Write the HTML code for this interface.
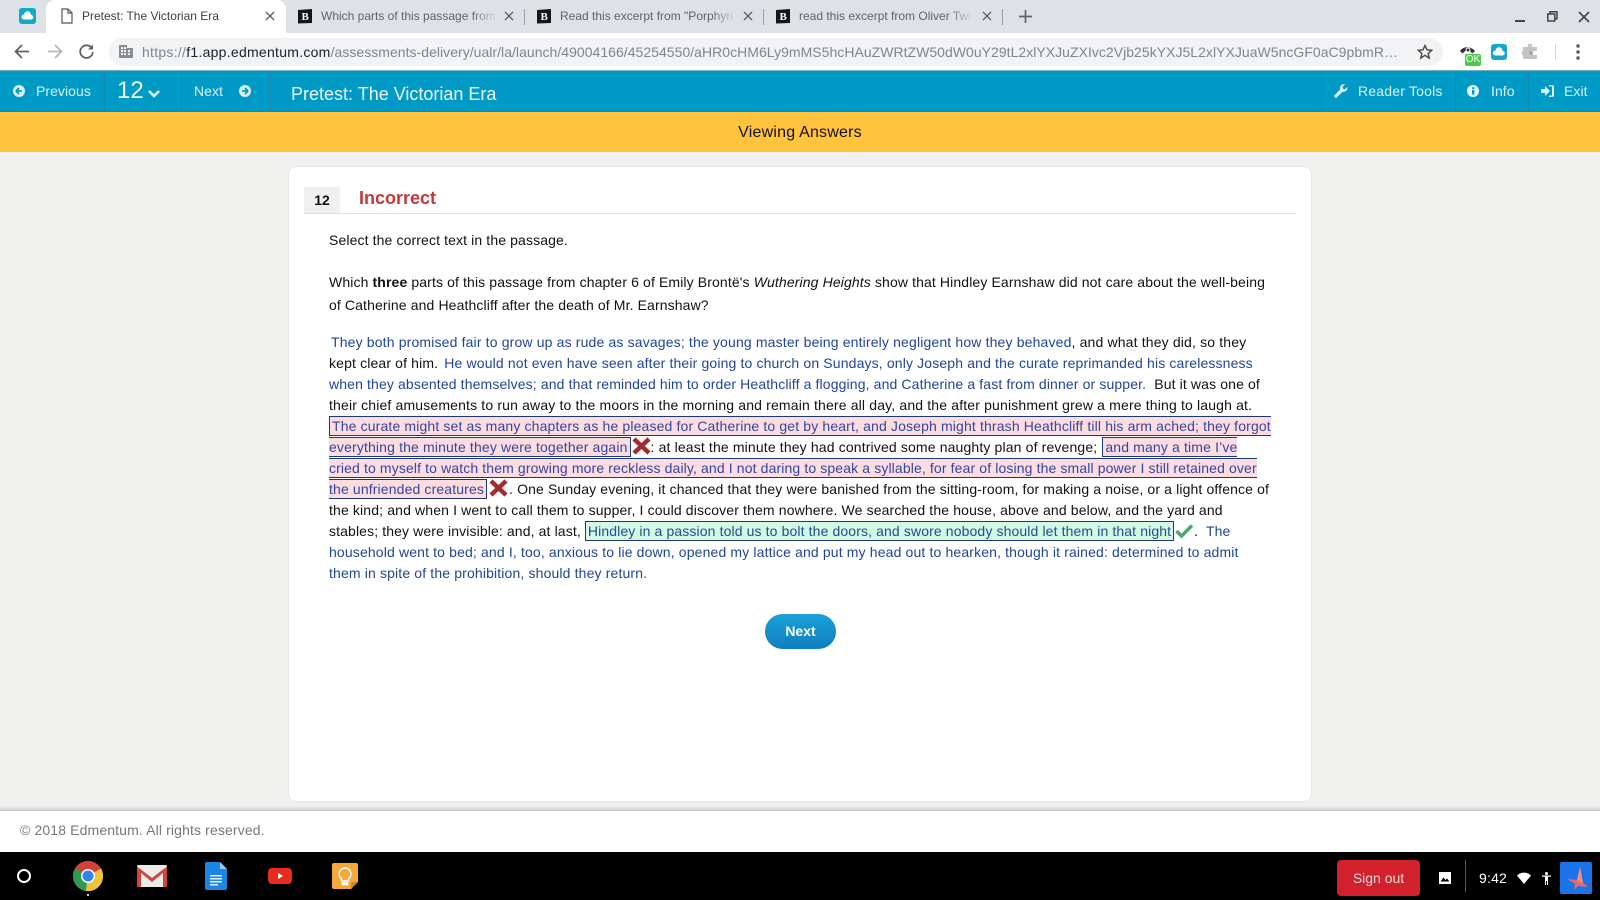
<!DOCTYPE html>
<html><head><meta charset="utf-8"><title>Pretest: The Victorian Era</title>
<style>
html,body{margin:0;padding:0;width:1600px;height:900px;overflow:hidden;background:#f0f0ee;font-family:"Liberation Sans",sans-serif;color:#111}
.a{position:absolute;white-space:pre}
svg{position:absolute;overflow:visible}
.t{font-size:12px;color:#5f6368;line-height:16px;top:8px;overflow:hidden}
.f{-webkit-mask-image:linear-gradient(90deg,#000 86%,transparent 100%);mask-image:linear-gradient(90deg,#000 86%,transparent 100%)}
.nav{font-size:14px;color:#d9f0f7;line-height:20px;top:81px;letter-spacing:.05px}
.sep{position:absolute;top:71px;height:40px;width:1px;background:#1b86ab}
.l{position:absolute;left:329px;white-space:pre;font-size:14px;line-height:21px;height:21px;letter-spacing:.145px}
.q{letter-spacing:.12px}
.b{color:#1f4597}
.p{background:#fbdde1;color:#36459f;border-top:1px solid #1c3878;border-bottom:1px solid #1c3878;padding:1px 0}
.g{background:#d3f8e4;color:#1b4f96;border:1px solid #1c3878;padding:1px 2px}
</style></head><body>
<!-- tab strip -->
<div class="a" style="left:0;top:0;width:1600px;height:33px;background:#dee1e6"></div>
<div class="a" style="left:46px;top:0;width:240px;height:33px;background:#fff;border-radius:9px 9px 0 0"></div>
<div class="a" style="left:19px;top:8px;width:17px;height:16px;background:#13a9c9;border-radius:3px"></div>
<svg style="left:19px;top:8px" width="17" height="16"><path d="M5 11.500a2.500 2.500 0 0 1 0-5 3.500 3.500 0 0 1 7 .5 2.200 2.200 0 0 1 0 4.500z" fill="#fff"/></svg>
<svg style="left:61px;top:8px" width="12" height="16" fill="none" stroke="#555" stroke-width="1.200"><path d="M1 1h6l4 4v10H1zM7 1v4h4"/></svg>
<div class="a t" style="left:82px;color:#3c4043;width:140px">Pretest: The Victorian Era</div>
<svg style="left:266px;top:12px" width="8" height="8" stroke="#5f6368" stroke-width="1.400"><path d="M0 0l8 8M8 0L0 8"/></svg>

<svg style="left:297px;top:8px" width="16" height="16"><path d="M1 2l14-1v14l-14 .5z" fill="#161616"/><text x="4.500" y="12" font-size="11" font-weight="bold" font-family="Liberation Serif" fill="#fff">B</text></svg>
<div class="a t f" style="left:321px;width:176px">Which parts of this passage from</div>
<svg style="left:505px;top:12px" width="8" height="8" stroke="#5f6368" stroke-width="1.400"><path d="M0 0l8 8M8 0L0 8"/></svg>
<div class="a" style="left:524px;top:9px;width:1px;height:16px;background:#9aa0a6"></div>
<svg style="left:536px;top:8px" width="16" height="16"><path d="M1 2l14-1v14l-14 .5z" fill="#161616"/><text x="4.500" y="12" font-size="11" font-weight="bold" font-family="Liberation Serif" fill="#fff">B</text></svg>
<div class="a t f" style="left:560px;width:176px">Read this excerpt from "Porphyri</div>
<svg style="left:744px;top:12px" width="8" height="8" stroke="#5f6368" stroke-width="1.400"><path d="M0 0l8 8M8 0L0 8"/></svg>
<div class="a" style="left:763px;top:9px;width:1px;height:16px;background:#9aa0a6"></div>
<svg style="left:775px;top:8px" width="16" height="16"><path d="M1 2l14-1v14l-14 .5z" fill="#161616"/><text x="4.500" y="12" font-size="11" font-weight="bold" font-family="Liberation Serif" fill="#fff">B</text></svg>
<div class="a t f" style="left:799px;width:174px">read this excerpt from Oliver Twi</div>
<svg style="left:983px;top:12px" width="8" height="8" stroke="#5f6368" stroke-width="1.400"><path d="M0 0l8 8M8 0L0 8"/></svg>
<div class="a" style="left:1002px;top:9px;width:1px;height:16px;background:#9aa0a6"></div>
<svg style="left:1019px;top:10px" width="13" height="13" stroke="#5f6368" stroke-width="1.700"><path d="M6.500 0v13M0 6.500h13"/></svg>
<!-- window controls -->
<div class="a" style="left:1515px;top:20px;width:10px;height:2px;background:#444"></div>
<svg style="left:1547px;top:11px" width="11" height="11" fill="none" stroke="#444" stroke-width="1.500"><path d="M3 3V.8h7v7H8M.8 3h7v7h-7z"/></svg>
<svg style="left:1579px;top:12px" width="10" height="10" stroke="#444" stroke-width="1.700"><path d="M0 0l10 10M10 0L0 10"/></svg>
<!-- toolbar -->
<div class="a" style="left:0;top:33px;width:1600px;height:38px;background:#fff"></div>
<svg style="left:14px;top:44px" width="16" height="15" fill="none" stroke="#5f6368" stroke-width="1.800"><path d="M15 7.500H2M8 1L1.500 7.500 8 14"/></svg>
<svg style="left:47px;top:44px" width="16" height="15" fill="none" stroke="#b4b7bb" stroke-width="1.800"><path d="M1 7.500h13M8 1l6.500 6.500L8 14"/></svg>
<svg style="left:79px;top:44px" width="15" height="15" fill="none" stroke="#5f6368" stroke-width="1.800"><path d="M13 4.500A6.300 6.300 0 1 0 13.800 8"/><path d="M14 .5v5H9z" fill="#5f6368" stroke="none"/></svg>
<div class="a" style="left:109px;top:38px;width:1334px;height:28px;background:#f1f3f4;border-radius:14px"></div>
<svg style="left:119px;top:45px" width="14" height="13" fill="#8a8d91"><path d="M0 0h8v3h6v10H0zM2 2v2h2V2zm3 0v2h2V2zM2 5v2h2V5zm3 0v2h2V5zM2 8v2h2V8zm3 0v2h2V8zm4-3v2h2V5zm0 3v2h2V8z" fill-rule="evenodd"/></svg>
<div class="a" style="left:142px;top:43px;font-size:14px;line-height:18px;color:#80868b;letter-spacing:.03px"><span style="letter-spacing:.27px">https://<span style="color:#202124">f1.app.edmentum.com</span></span>/assessments-delivery/ualr/la/launch/49004166/45254550/aHR0cHM6Ly9mMS5hcHAuZWRtZW50dW0uY29tL2xlYXJuZXIvc2Vjb25kYXJ5L2xlYXJuaW5ncGF0aC9pbmR…</div>
<svg style="left:1417px;top:44px" width="16" height="15" fill="none" stroke="#444" stroke-width="1.400"><path d="M8 1.500l2 4.300 4.700.5-3.500 3.200 1 4.600L8 11.300l-4.200 2.800 1-4.600L1.300 6.300 6 5.800z"/></svg>
<svg style="left:1459px;top:45px" width="18" height="11"><path d="M1 6c3-5 11-5 15 0-1 1-2 2-3 2.500a5 5 0 0 0-9 0C3 8 2 7 1 6z" fill="#333"/><circle cx="9" cy="5" r="2.500" fill="#fff"/><circle cx="9" cy="5" r="1.500" fill="#333"/></svg>
<div class="a" style="left:1465px;top:54px;width:16px;height:12px;background:#4cc94a;border-radius:2px;color:#fff;font-size:10px;line-height:12px;text-align:center">OK</div>
<div class="a" style="left:1491px;top:44px;width:16px;height:16px;background:#13a9c9;border-radius:3px"></div>
<svg style="left:1491px;top:44px" width="16" height="16"><path d="M4.500 11.500a2.500 2.500 0 0 1 0-5 3.500 3.500 0 0 1 7 .5 2.200 2.200 0 0 1 0 4.500z" fill="#fff"/></svg>
<svg style="left:1522px;top:44px" width="16" height="16" fill="#c2c4c6"><path d="M6 0h4v3h5v4h-2.500a2 2 0 0 0 0 4H15v4H1v-4H0V7h1V3h5z"/><circle cx="9" cy="9" r="2" fill="#a5a7a9"/></svg>
<div class="a" style="left:1555px;top:44px;width:1px;height:16px;background:#d4d6d8"></div>
<svg style="left:1576px;top:44px" width="4" height="16" fill="#555"><circle cx="2" cy="2" r="1.700"/><circle cx="2" cy="8" r="1.700"/><circle cx="2" cy="14" r="1.700"/></svg>
<!-- blue nav -->
<div class="a" style="left:0;top:70px;width:1600px;height:42px;background:#009ac7"></div>
<div class="a" style="left:0;top:70px;width:1600px;height:1px;background:#6fb4cb"></div>
<div class="a" style="left:0;top:111px;width:1600px;height:1px;background:#1b8aa0"></div>
<div class="sep" style="left:104px"></div><div class="sep" style="left:181px"></div><div class="sep" style="left:270px"></div>
<div class="sep" style="left:1321px"></div><div class="sep" style="left:1455px"></div><div class="sep" style="left:1528px"></div>
<svg style="left:13px;top:85px" width="12" height="12"><circle cx="6" cy="6" r="6" fill="#d9f0f7"/><path d="M3 6l3-3M3 6l3 3M3 6h6" stroke="#009ac7" stroke-width="1.800" fill="none"/></svg>
<div class="a nav" style="left:36px">Previous</div>
<div class="a" style="left:117px;top:76px;font-size:24px;line-height:30px;color:#eaf7fb">12</div>
<svg style="left:148px;top:90px" width="12" height="8" fill="none" stroke="#eaf7fb" stroke-width="2.500"><path d="M1 1l5 5 5-5"/></svg>
<div class="a nav" style="left:194px">Next</div>
<svg style="left:239px;top:85px" width="12" height="12"><circle cx="6" cy="6" r="6" fill="#d9f0f7"/><path d="M9 6L6 3M9 6L6 9M9 6H3" stroke="#009ac7" stroke-width="1.800" fill="none"/></svg>
<div class="a" style="left:291px;top:83px;font-size:18px;line-height:22px;color:#eaf7fb">Pretest: The Victorian Era</div>
<svg style="left:1334px;top:84px" width="14" height="14" fill="#d9f0f7"><path d="M13.500 3l-2.500 2.200L9 4.700 8.500 2.800 11 .5C8.500-.3 6 1.500 6 4c0 .5 0 1 .2 1.300L.8 11a1.500 1.500 0 0 0 2.200 2.200l5.700-5.500C11.500 8.500 14 6 13.500 3z"/></svg>
<div class="a nav" style="left:1358px;letter-spacing:.2px">Reader Tools</div>
<svg style="left:1467px;top:85px" width="12" height="12"><circle cx="6" cy="6" r="6" fill="#eaf7fb"/><rect x="5" y="5" width="2.400" height="4.500" fill="#009ac7"/><rect x="5" y="2.300" width="2.400" height="1.800" fill="#009ac7"/></svg>
<div class="a nav" style="left:1491px">Info</div>
<svg style="left:1541px;top:85px" width="13" height="12" fill="#d9f0f7"><path d="M0 4h4V1l5 5-5 5V8H0z"/><path d="M8 0h3a2 2 0 0 1 2 2v8a2 2 0 0 1-2 2H8v-1.500h3V1.500H8z"/></svg>
<div class="a nav" style="left:1564px">Exit</div>
<!-- yellow -->
<div class="a" style="left:0;top:112px;width:1600px;height:40px;background:#ffc33d"></div>
<div class="a" style="left:0;top:123px;width:1600px;text-align:center;font-size:16px;line-height:20px;color:#111;letter-spacing:.2px">Viewing Answers</div>
<!-- card -->
<div class="a" style="left:288px;top:166px;width:1022px;height:634px;background:#fff;border:1px solid #e6e6e6;border-radius:8px"></div>
<div class="a" style="left:304px;top:187px;width:36px;height:26px;background:#f0f0f0;font-weight:bold;font-size:14px;line-height:26px;text-align:center">12</div>
<div class="a" style="left:304px;top:213px;width:992px;height:1px;background:#e2e2e2"></div>
<div class="a" style="left:359px;top:187px;font-weight:bold;font-size:18px;line-height:22px;color:#c0393b">Incorrect</div>
<div class="l q" style="top:230px">Select the correct text in the passage.</div>
<div class="l q" style="top:272px">Which <b>three</b> parts of this passage from chapter 6 of Emily Brontë's <i>Wuthering Heights</i> show that Hindley Earnshaw did not care about the well-being</div>
<div class="l q" style="top:295px">of Catherine and Heathcliff after the death of Mr. Earnshaw?</div>

<div class="l" style="top:332px;left:331px;letter-spacing:.155px"><span class="b">They both promised fair to grow up as rude as savages; the young master being entirely negligent how they behaved</span>, and what they did, so they</div>
<div class="l" style="top:353px">kept clear of him.  <span class="b" style="margin-left:-2px">He would not even have seen after their going to church on Sundays, only Joseph and the curate reprimanded his carelessness</span></div>
<div class="l" style="top:374px;letter-spacing:.13px"><span class="b">when they absented themselves; and that reminded him to order Heathcliff a flogging, and Catherine a fast from dinner or supper.</span>  But it was one of</div>
<div class="l" style="top:395px;letter-spacing:.16px">their chief amusements to run away to the moors in the morning and remain there all day, and the after punishment grew a mere thing to laugh at.</div>
<div class="l" style="top:416px"><span class="p" style="border-left:1px solid #1c3878;padding-left:2px">The curate might set as many chapters as he pleased for Catherine to get by heart, and Joseph might thrash Heathcliff till his arm ached; they forgot</span></div>
<div class="l" style="top:437px"><span class="p" style="border-right:1px solid #1c3878;padding-right:2px">everything the minute they were together again</span><span style="display:inline-block;width:20px"></span>: at least the minute they had contrived some naughty plan of revenge;  <span class="p" style="border-left:1px solid #1c3878;padding-left:2px;margin-left:-3px">and many a time I’ve</span></div>
<div class="l" style="top:458px;letter-spacing:.125px"><span class="p">cried to myself to watch them growing more reckless daily, and I not daring to speak a syllable, for fear of losing the small power I still retained over</span></div>
<div class="l" style="top:479px;letter-spacing:.135px"><span class="p" style="border-right:1px solid #1c3878;padding-right:2px">the unfriended creatures</span><span style="display:inline-block;width:22px"></span>. One Sunday evening, it chanced that they were banished from the sitting-room, for making a noise, or a light offence of</div>
<div class="l" style="top:500px;letter-spacing:.14px">the kind; and when I went to call them to supper, I could discover them nowhere. We searched the house, above and below, and the yard and</div>
<div class="l" style="top:521px;letter-spacing:.12px">stables; they were invisible: and, at last, <span class="g">Hindley in a passion told us to bolt the doors, and swore nobody should let them in that night</span><span style="display:inline-block;width:20px"></span>.  <span class="b">The</span></div>
<div class="l" style="top:542px"><span class="b">household went to bed; and I, too, anxious to lie down, opened my lattice and put my head out to hearken, though it rained: determined to admit</span></div>
<div class="l" style="top:563px"><span class="b">them in spite of the prohibition, should they return.</span></div>
<svg style="left:632px;top:437px" width="19" height="18" stroke="#a32a2e" stroke-width="4.500"><path d="M2 2l15 14M17 2L2 16"/></svg>
<svg style="left:489px;top:479px" width="19" height="18" stroke="#a32a2e" stroke-width="4.500"><path d="M2 2l15 14M17 2L2 16"/></svg>
<svg style="left:1175px;top:524px" width="19" height="14" fill="none" stroke="#4ca86d" stroke-width="3.500"><path d="M1.500 7l5 5L17 1.500"/></svg>
<div class="a" style="left:765px;top:614px;width:71px;height:35px;border-radius:18px;background:linear-gradient(#1ba0d8,#0f7fbd);color:#fff;font-weight:bold;font-size:14px;line-height:35px;text-align:center">Next</div>
<!-- footer -->
<div class="a" style="left:0;top:806px;width:1600px;height:5px;background:linear-gradient(#efefed,#c9c9c9)"></div>
<div class="a" style="left:0;top:811px;width:1600px;height:41px;background:#fff"></div>
<div class="a" style="left:20px;top:821px;font-size:14px;line-height:18px;color:#777;letter-spacing:.13px">© 2018 Edmentum. All rights reserved.</div>
<!-- shelf -->
<div class="a" style="left:0;top:852px;width:1600px;height:48px;background:#000"></div>
<svg style="left:17px;top:869px" width="14" height="14" fill="none" stroke="#fff" stroke-width="2"><circle cx="7" cy="7" r="6"/></svg>
<svg style="left:73px;top:861px" width="30" height="30"><circle cx="15" cy="15" r="15" fill="#e0a93a"/><path d="M15 15L2 7.500A15 15 0 0 1 28 7.500z" fill="#d1403a"/><path d="M15 15l-13-7.500A15 15 0 0 0 13 30z" fill="#2f9a55"/><path d="M15 15L28 7.500A15 15 0 0 1 13 30z" fill="#f2c23e"/><circle cx="15" cy="15" r="7" fill="#fff"/><circle cx="15" cy="15" r="5.500" fill="#2f86e8"/></svg>
<div class="a" style="left:87px;top:894px;width:2px;height:2px;background:#ccc"></div>
<svg style="left:137px;top:865px" width="30" height="22"><rect width="30" height="22" rx="1.500" fill="#ececec"/><path d="M0 1.500L15 13 30 1.500V22h-4V8L15 17 4 8v14H0z" fill="#d0453e"/></svg>
<svg style="left:205px;top:862px" width="22" height="28"><path d="M2 0h13l7 7v19a2 2 0 0 1-2 2H2a2 2 0 0 1-2-2V2a2 2 0 0 1 2-2z" fill="#1b86e3"/><path d="M15 0l7 7h-7z" fill="#9cc9f3"/><path d="M5 13h12v1.500H5zM5 16h12v1.500H5zM5 19h12v1.500H5zM5 22h8v1.500H5z" fill="#e3f0fb"/></svg>
<svg style="left:268px;top:868px" width="24" height="16"><rect width="24" height="16" rx="4" fill="#e62b1f"/><path d="M10 5l5 3-5 3z" fill="#fff"/></svg>
<svg style="left:332px;top:863px" width="26" height="26"><path d="M2 0h22a2 2 0 0 1 2 2v17l-7 7H2a2 2 0 0 1-2-2V2a2 2 0 0 1 2-2z" fill="#f5a93a"/><path d="M19 26l7-7h-5a2 2 0 0 0-2 2z" fill="#c9852a"/><path d="M13 5a6 6 0 0 0-3.500 10.800V18h7v-2.200A6 6 0 0 0 13 5zM10.500 20h5v1.500h-5z" fill="none" stroke="#fff" stroke-width="1.500"/></svg>
<div class="a" style="left:1337px;top:860px;width:83px;height:36px;background:#d2202c;border-radius:4px;color:#f6d9db;font-size:14px;line-height:36px;text-align:center">Sign out</div>
<svg style="left:1439px;top:872px" width="12" height="12"><rect width="12" height="12" fill="#fff"/><path d="M1.500 9.500l3-4 2 2.500 1.500-1.500 2.500 3z" fill="#000"/></svg>
<div class="a" style="left:1465px;top:860px;width:1px;height:32px;background:#555"></div>
<div class="a" style="left:1479px;top:869px;font-size:14px;line-height:18px;color:#fff;letter-spacing:.2px">9:42</div>
<svg style="left:1517px;top:873px" width="14" height="11" fill="#fff"><path d="M0 2.500a10 10 0 0 1 14 0L7 11z"/></svg>
<svg style="left:1542px;top:872px" width="9" height="13" fill="#fff"><circle cx="4.500" cy="1.500" r="1.500"/><path d="M0 3.500h9v1.300H6V13H5V9H4v4H3V4.800H0z"/></svg>
<div class="a" style="left:1560px;top:862px;width:32px;height:32px;background:#1a73e8;border-radius:2px"></div>
<svg style="left:1565px;top:866px" width="24" height="25"><path d="M15 1l3 16 5 4-10-1L9 24l1-6-8-5 10 1z" fill="#e86a68"/><path d="M15 1l3 16-6-3z" fill="#f08f8a"/></svg>
</body></html>
